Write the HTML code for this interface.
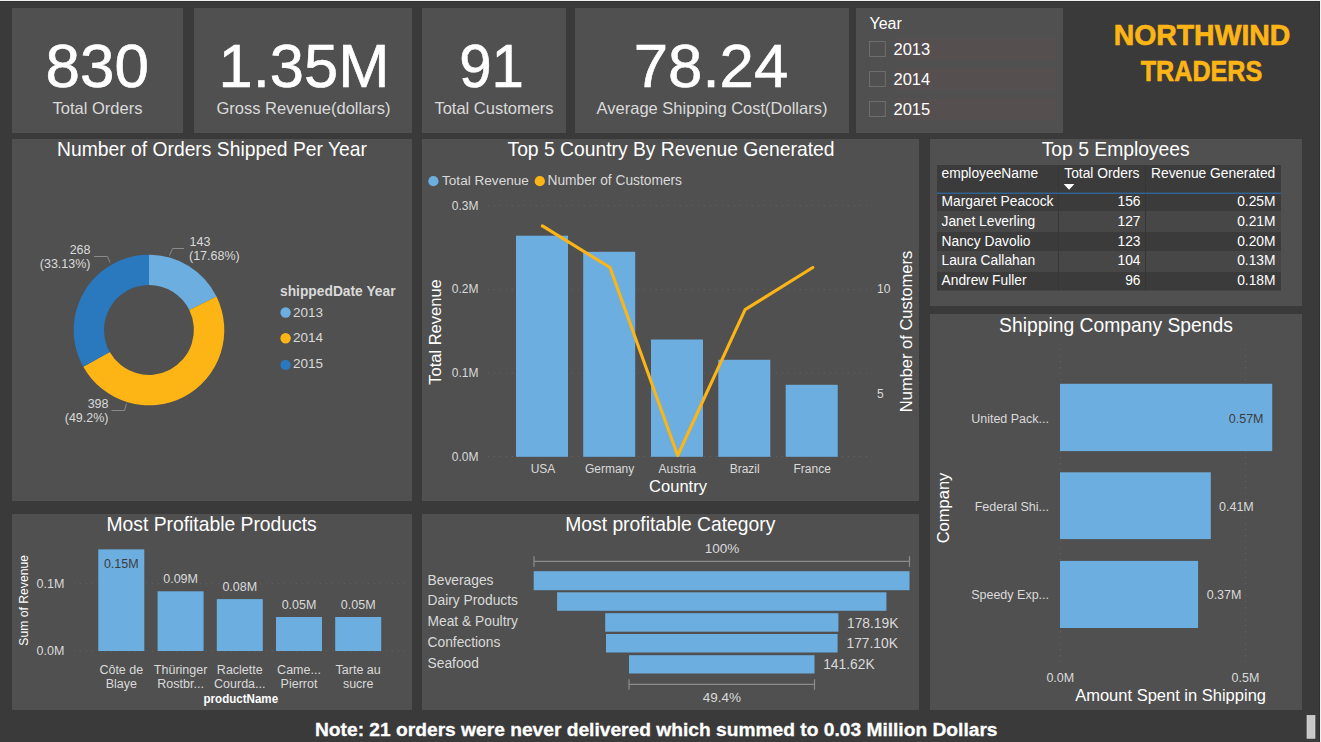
<!DOCTYPE html>
<html><head><meta charset="utf-8">
<style>
html,body{margin:0;padding:0;background:#3a3a3a;overflow:hidden;}
svg{display:block;font-family:"Liberation Sans",sans-serif;}
.w{fill:#ffffff}
.g{fill:#dadada}
.bar{fill:#6daee0}
.grid{stroke:#626262;stroke-width:1;stroke-dasharray:1 5}
</style></head>
<body>
<svg width="1321" height="742" viewBox="0 0 1321 742">
<rect x="0" y="0" width="1321" height="742" fill="#3a3a3a"/>
<rect x="0" y="0" width="1321" height="1" fill="#f2f2f2"/>
<rect x="0" y="1" width="1320" height="1" fill="#303030"/>
<rect x="1320" y="0" width="1" height="742" fill="#f2f2f2"/>
<rect x="1319" y="1" width="1" height="741" fill="#303030"/>

<!-- panels -->
<g fill="#505050">
<rect x="12" y="8" width="171" height="125"/>
<rect x="194" y="8" width="218" height="125"/>
<rect x="422" y="8" width="144" height="125"/>
<rect x="575" y="8" width="274" height="125"/>
<rect x="856" y="8" width="207" height="125"/>
<rect x="12" y="139" width="400" height="362"/>
<rect x="422" y="139" width="497" height="362"/>
<rect x="930" y="139" width="372" height="167"/>
<rect x="930" y="314" width="372" height="396"/>
<rect x="12" y="514" width="400" height="196"/>
<rect x="422" y="514" width="497" height="196"/>
</g>

<!-- cards -->
<g class="w" font-size="60" text-anchor="middle" stroke="#ffffff" stroke-width="0.6">
<text transform="translate(97.3,87.1) scale(1.034,1.025)">830</text>
<text transform="translate(304,87.1) scale(1.024,1.025)">1.35M</text>
<text transform="translate(491.5,87.1) scale(0.970,1.025)">91</text>
<text transform="translate(711,87.1) scale(1.030,1.025)">78.24</text>
</g>
<g class="g" font-size="16.5" text-anchor="middle">
<text x="97.5" y="114">Total Orders</text>
<text x="303.5" y="114">Gross Revenue(dollars)</text>
<text x="494" y="114">Total Customers</text>
<text x="712" y="114">Average Shipping Cost(Dollars)</text>
</g>

<!-- slicer -->
<text class="w" x="869.5" y="29" font-size="16">Year</text>
<g fill="#554f4f">
<rect x="894" y="38" width="163" height="22"/>
<rect x="894" y="68" width="163" height="22"/>
<rect x="894" y="98" width="163" height="22"/>
</g>
<g fill="none" stroke="#6e6e6e" stroke-width="1">
<rect x="869.5" y="41.5" width="15.8" height="15"/>
<rect x="869.5" y="71.5" width="15.8" height="15"/>
<rect x="869.5" y="101.5" width="15.8" height="15"/>
</g>
<g class="w" font-size="16.5">
<text x="893.5" y="55">2013</text>
<text x="893.5" y="85">2014</text>
<text x="893.5" y="115">2015</text>
</g>

<!-- logo -->
<g fill="#fdb515" stroke="#fdb515" stroke-width="0.7" font-weight="bold" text-anchor="middle" font-size="28">
<text transform="translate(1202,44.6) scale(0.932,0.94)" font-size="30.5">NORTHWIND</text>
<text transform="translate(1201.5,80.5) scale(0.825,0.94)" font-size="30.5">TRADERS</text>
</g>


<!-- donut panel -->
<text class="w" transform="translate(212,156.3) scale(0.965,1)" font-size="20" text-anchor="middle">Number of Orders Shipped Per Year</text>
<path fill="#6daee0" d="M149.00,254.70 A75.3,75.3 0 0 1 216.48,296.58 L189.32,310.03 A45,45 0 0 0 149.00,285.00 Z"/>
<path fill="#fdb515" d="M216.48,296.58 A75.3,75.3 0 0 1 83.29,366.77 L109.73,351.97 A45,45 0 0 0 189.32,310.03 Z"/>
<path fill="#2a78be" d="M83.29,366.77 A75.3,75.3 0 0 1 149.00,254.70 L149.00,285.00 A45,45 0 0 0 109.73,351.97 Z"/>
<g fill="none" stroke="#8a8a8a" stroke-width="1">
<polyline points="169.5,255.5 172.5,248.5 184,248.5"/>
<polyline points="110,262.5 107.5,256.5 94,256.5"/>
<polyline points="126.5,403.5 124.5,410.5 111.5,410.5"/>
</g>
<g class="g" font-size="12.5">
<text x="189.5" y="246">143</text>
<text x="189" y="260">(17.68%)</text>
<text x="90.5" y="254" text-anchor="end">268</text>
<text x="90.5" y="267.5" text-anchor="end">(33.13%)</text>
<text x="108.5" y="408.3" text-anchor="end">398</text>
<text x="108.5" y="421.6" text-anchor="end">(49.2%)</text>
</g>
<text class="g" x="280" y="296" font-size="13.8" font-weight="bold">shippedDate Year</text>
<circle cx="285.6" cy="312.5" r="5.2" fill="#6daee0"/>
<circle cx="285.6" cy="338.3" r="5.2" fill="#fdb515"/>
<circle cx="285.6" cy="364.9" r="5.2" fill="#2a78be"/>
<g class="g" font-size="13.5">
<text x="293" y="316.9">2013</text>
<text x="293" y="341.8">2014</text>
<text x="293" y="368.4">2015</text>
</g>

<!-- combo chart -->
<text class="w" transform="translate(671,156) scale(0.965,1)" font-size="20" text-anchor="middle">Top 5 Country By Revenue Generated</text>
<circle cx="433.4" cy="181.2" r="5.1" fill="#6daee0"/>
<text class="g" x="442" y="184.7" font-size="13.6">Total Revenue</text>
<circle cx="539.8" cy="181.2" r="5.1" fill="#fdb515"/>
<text class="g" x="547.5" y="184.7" font-size="13.75">Number of Customers</text>
<g class="grid">
<line x1="488" y1="205.5" x2="870" y2="205.5"/>
<line x1="488" y1="289.4" x2="870" y2="289.4"/>
<line x1="488" y1="373" x2="870" y2="373"/>
<line x1="488" y1="456.5" x2="870" y2="456.5"/>
</g>
<g class="g" font-size="12" text-anchor="end">
<text x="478.5" y="209.8">0.3M</text>
<text x="478.5" y="293.2">0.2M</text>
<text x="478.5" y="377.3">0.1M</text>
<text x="478.5" y="460.6">0.0M</text>
</g>
<g class="g" font-size="12">
<text x="877" y="293">10</text>
<text x="877" y="397.5">5</text>
</g>
<g class="bar">
<rect x="516" y="235.7" width="52" height="221.1"/>
<rect x="583.2" y="251.8" width="52" height="205"/>
<rect x="651" y="339.5" width="52" height="117.3"/>
<rect x="718.3" y="359.8" width="52" height="97"/>
<rect x="785.7" y="384.8" width="52" height="72"/>
</g>
<polyline points="542.4,225.9 610,267.5 677.7,455.5 745.1,309.6 812.8,267.5" fill="none" stroke="#fdb515" stroke-width="3.1" stroke-linejoin="round" stroke-linecap="round"/>
<g class="g" font-size="12" text-anchor="middle">
<text x="543" y="473">USA</text>
<text x="609.6" y="473">Germany</text>
<text x="677.3" y="473">Austria</text>
<text x="744.7" y="473">Brazil</text>
<text x="812.2" y="473">France</text>
</g>
<text class="w" x="678" y="492" font-size="16.5" text-anchor="middle">Country</text>
<text class="w" transform="translate(440.7,332) rotate(-90)" font-size="16.5" text-anchor="middle">Total Revenue</text>
<text class="w" transform="translate(912,331.5) rotate(-90)" font-size="16.5" text-anchor="middle">Number of Customers</text>


<!-- employees -->
<text class="w" transform="translate(1115.7,156) scale(0.965,1)" font-size="20" text-anchor="middle">Top 5 Employees</text>
<rect x="937" y="165" width="344" height="28" fill="#3b3b3b"/>
<rect x="937" y="192.6" width="344" height="1.3" fill="#2e679c"/>
<rect x="937" y="194" width="344" height="17" fill="#3b3b3b"/>
<rect x="937" y="211" width="344" height="21" fill="#474747"/>
<rect x="937" y="232" width="344" height="19" fill="#3b3b3b"/>
<rect x="937" y="251" width="344" height="21" fill="#474747"/>
<rect x="937" y="272" width="344" height="18.5" fill="#3b3b3b"/>
<g fill="#363636">
<rect x="1058" y="165" width="1" height="27.6"/>
<rect x="1145" y="165" width="1" height="27.6"/>
<rect x="1058" y="194" width="1" height="96.5"/>
<rect x="1145" y="194" width="1" height="96.5"/>
</g>
<g class="w" font-size="13.8">
<text x="941.5" y="178">employeeName</text>
<text x="1064.3" y="178">Total Orders</text>
<text x="1151" y="178">Revenue Generated</text>
</g>
<path d="M1063.7,184 L1074.4,184 L1069.05,189.7 Z" fill="#ffffff"/>
<g class="w" font-size="13.8">
<text x="941.5" y="205.6">Margaret Peacock</text>
<text x="941.5" y="225.8">Janet Leverling</text>
<text x="941.5" y="246">Nancy Davolio</text>
<text x="941.5" y="264.9">Laura Callahan</text>
<text x="941.5" y="284.9">Andrew Fuller</text>
</g>
<g class="w" font-size="13.8" text-anchor="end">
<text x="1140.5" y="205.6">156</text>
<text x="1140.5" y="225.8">127</text>
<text x="1140.5" y="246">123</text>
<text x="1140.5" y="264.9">104</text>
<text x="1140.5" y="284.9">96</text>
<text x="1275.5" y="205.6">0.25M</text>
<text x="1275.5" y="225.8">0.21M</text>
<text x="1275.5" y="246">0.20M</text>
<text x="1275.5" y="264.9">0.13M</text>
<text x="1275.5" y="284.9">0.18M</text>
</g>

<!-- shipping -->
<text class="w" transform="translate(1116,332.3) scale(0.965,1)" font-size="20" text-anchor="middle">Shipping Company Spends</text>
<g class="grid">
<line x1="1060.5" y1="349" x2="1060.5" y2="667"/>
<line x1="1245.5" y1="349" x2="1245.5" y2="667"/>
</g>
<g class="bar">
<rect x="1060" y="383.8" width="212.2" height="67.3"/>
<rect x="1060" y="472.3" width="150.8" height="66.8"/>
<rect x="1060" y="560.9" width="138.1" height="67.1"/>
</g>
<g class="g" font-size="12.5" text-anchor="end">
<text x="1049" y="423.3">United Pack...</text>
<text x="1049" y="510.5">Federal Shi...</text>
<text x="1049" y="599.3">Speedy Exp...</text>
</g>
<text x="1263.5" y="423.3" font-size="12.5" text-anchor="end" fill="#3d3d3d">0.57M</text>
<g class="g" font-size="12.5">
<text x="1219" y="510.5">0.41M</text>
<text x="1206.7" y="599.3">0.37M</text>
</g>
<g class="g" font-size="12.5" text-anchor="middle">
<text x="1060.3" y="682.3">0.0M</text>
<text x="1245.4" y="682.3">0.5M</text>
</g>
<text class="w" x="1170.6" y="701" font-size="16.5" text-anchor="middle">Amount Spent in Shipping</text>
<text class="w" transform="translate(948.5,508) rotate(-90)" font-size="16.5" text-anchor="middle">Company</text>

<!-- products -->
<text class="w" transform="translate(211.6,530.7) scale(0.965,1)" font-size="20" text-anchor="middle">Most Profitable Products</text>
<g class="grid">
<line x1="74" y1="583.7" x2="406" y2="583.7"/>
<line x1="74" y1="651" x2="406" y2="651"/>
</g>
<g class="g" font-size="12.5" text-anchor="end">
<text x="64.3" y="588">0.1M</text>
<text x="64.3" y="655.3">0.0M</text>
</g>
<text class="w" transform="translate(27.5,600.3) rotate(-90) scale(0.975,1)" font-size="12.5" text-anchor="middle">Sum of Revenue</text>
<g class="bar">
<rect x="98.3" y="549.4" width="46" height="101.6"/>
<rect x="157.6" y="591.3" width="46" height="59.7"/>
<rect x="216.8" y="599.1" width="46" height="51.9"/>
<rect x="276" y="617" width="46" height="34"/>
<rect x="335.2" y="617" width="46" height="34"/>
</g>
<text x="121.3" y="568" font-size="12.5" text-anchor="middle" fill="#3d3d3d">0.15M</text>
<g class="g" font-size="12.5" text-anchor="middle">
<text x="180.6" y="583">0.09M</text>
<text x="239.8" y="590.6">0.08M</text>
<text x="299" y="608.5">0.05M</text>
<text x="358.2" y="608.5">0.05M</text>
<text x="121.3" y="674">Côte de</text>
<text x="121.3" y="687.6">Blaye</text>
<text x="180.6" y="674">Thüringer</text>
<text x="180.6" y="687.6">Rostbr...</text>
<text x="239.8" y="674">Raclette</text>
<text x="239.8" y="687.6">Courda...</text>
<text x="299" y="674">Came...</text>
<text x="299" y="687.6">Pierrot</text>
<text x="358.2" y="674">Tarte au</text>
<text x="358.2" y="687.6">sucre</text>
</g>
<text class="w" transform="translate(240.8,702.5) scale(0.965,1)" font-size="12" font-weight="bold" text-anchor="middle">productName</text>

<!-- category -->
<text class="w" transform="translate(670.3,531) scale(0.965,1)" font-size="20" text-anchor="middle">Most profitable Category</text>
<text class="g" x="722" y="553" font-size="13.5" text-anchor="middle">100%</text>
<g fill="none" stroke="#8c8c8c" stroke-width="1.2">
<path d="M534,561.3 H909.5 M534,556.2 V566.7 M909.5,556.2 V566.7"/>
<path d="M629,684.3 H814.5 M629,679.2 V689.7 M814.5,679.2 V689.7"/>
</g>
<g class="bar">
<rect x="533.7" y="571.2" width="375.8" height="19"/>
<rect x="557.1" y="592.3" width="329.3" height="18.5"/>
<rect x="605.2" y="613.2" width="233.2" height="18.5"/>
<rect x="606" y="634" width="231.6" height="18.5"/>
<rect x="629" y="655.2" width="185.5" height="18.3"/>
</g>
<g class="g" font-size="13.8">
<text x="427.5" y="584.5">Beverages</text>
<text x="427.5" y="605.3">Dairy Products</text>
<text x="427.5" y="626.2">Meat &amp; Poultry</text>
<text x="427.5" y="647">Confections</text>
<text x="427.5" y="668">Seafood</text>
<text x="847" y="627.5">178.19K</text>
<text x="846.5" y="648.3">177.10K</text>
<text x="823.2" y="669.2">141.62K</text>
</g>
<text class="g" x="721.8" y="702" font-size="13.5" text-anchor="middle">49.4%</text>

<!-- note -->
<text class="w" transform="translate(315,735.7) scale(1.0107,0.94)" font-size="19" font-weight="bold" stroke="#ffffff" stroke-width="0.3">Note: 21 orders were never delivered which summed to 0.03 Million Dollars</text>
<rect x="1307" y="715.3" width="8" height="23" fill="#c8c8c8" stroke="#dcdcdc" stroke-width="0.6"/>
</svg>
</body></html>
